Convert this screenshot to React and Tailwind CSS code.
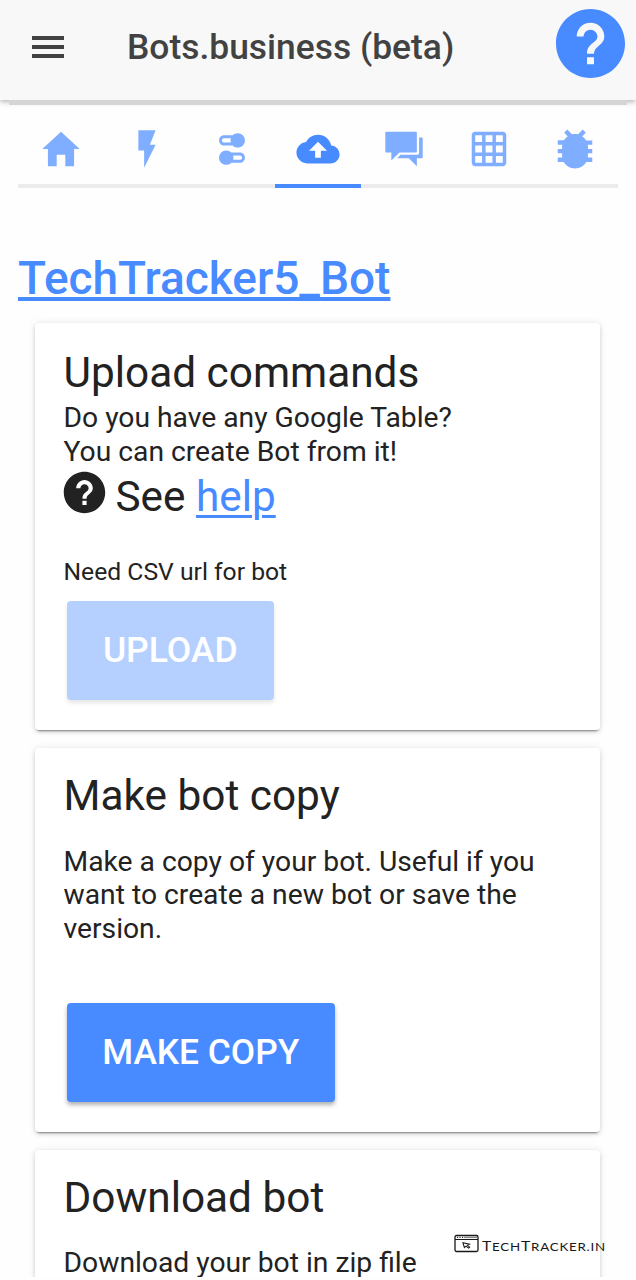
import {
  IoMdHome,
  IoMdFlash,
  IoMdSwitch,
  IoMdCloudUpload,
  IoMdChatboxes,
  IoMdGrid,
  IoMdBug,
  IoMdHelpCircle,
} from "react-icons/io";

const tabs = [
  { name: "Home", Icon: IoMdHome },
  { name: "Commands", Icon: IoMdFlash },
  { name: "Options", Icon: IoMdSwitch },
  { name: "Upload", Icon: IoMdCloudUpload, active: true },
  { name: "Chats", Icon: IoMdChatboxes },
  { name: "Tables", Icon: IoMdGrid },
  { name: "Errors", Icon: IoMdBug },
];

function Header() {
  return (
    <header className="relative z-10 flex h-[100px] shrink-0 items-center bg-[#f8f8f8] pl-8 pr-[11px] shadow-[0_2px_5px_rgba(0,0,0,0.28)]">
      <button aria-label="Menu" className="mt-[-6px] flex w-8 flex-col gap-[5px]">
        <span className="h-1 bg-[#424242]" />
        <span className="h-1 bg-[#424242]" />
        <span className="h-1 bg-[#424242]" />
      </button>
      <h1 className="ml-[63px] mt-[-6px] flex-1 whitespace-nowrap text-[35.4px] font-medium leading-[42px] text-[#424242]">
        Bots.business (beta)
      </h1>
      <button aria-label="Help" className="mt-[-14px]">
        <IoMdHelpCircle className="size-[85px] -m-2 text-[#488aff]" />
      </button>
    </header>
  );
}

function Tabs() {
  return (
    <nav className="mx-[18px] flex h-[83px] shrink-0 border-b-4 border-[#ececec]">
      {tabs.map(({ name, Icon, active }) => (
        <button
          key={name}
          aria-label={name}
          className={
            active
              ? "-mb-1 flex flex-1 justify-center border-b-4 border-[#488aff] pt-[21px] text-[#488aff]"
              : "flex flex-1 justify-center pt-[21px] text-[#7fadff]"
          }
        >
          <Icon className="size-[46px]" />
        </button>
      ))}
    </nav>
  );
}

function Card({ className, children }) {
  return (
    <section
      className={`ml-[35px] w-[565px] shrink-0 rounded-[4px] bg-white pl-[28.5px] shadow-[0_3px_2px_-2px_rgba(0,0,0,0.4),0_0_9px_rgba(0,0,0,0.08),0_2px_4px_rgba(0,0,0,0.14)] ${className}`}
    >
      {children}
    </section>
  );
}

function CardTitle({ children }) {
  return <h2 className="text-[42.35px] leading-[50px]">{children}</h2>;
}

export default function App() {
  return (
    <div className="relative flex h-[1280px] w-[636px] flex-col overflow-hidden bg-[#fefefe] font-[Roboto,sans-serif] text-[#222]">
      <div className="flex h-[1277px] flex-col overflow-hidden">
        <Header />
        <div className="relative z-10 mx-[9px] h-[5px] shrink-0 bg-[#d5d5d5]" />
        <Tabs />
        <h2 className="ml-[18px] mt-[63px] text-[46px] font-medium leading-[55px] text-[#488aff]">
          <a className="underline decoration-[4px] underline-offset-[3px] [text-decoration-skip-ink:none]">TechTracker5_Bot</a>
        </h2>

        <Card className="mt-[17px] h-[407px] pt-[25px]">
          <CardTitle>Upload commands</CardTitle>
          <p className="mt-[3px] text-[28.25px] leading-[33.5px]">
            Do you have any Google Table?
            <br />
            You can create Bot from it!
          </p>
          <div className="flex h-[54px] items-start text-[42.3px] leading-[50px]">
            <IoMdHelpCircle className="-ml-[5px] -mt-[1px] mr-[6px] size-[51px]" />
            <span className="mt-[4px]">
              See <a className="text-[#488aff] underline decoration-[3px] underline-offset-[4px]">help</a>
            </span>
          </div>
          <p className="mt-[35px] text-[24.7px] leading-[29px]">Need CSV url for bot</p>
          <button className="ml-[3.5px] mt-[15px] h-[99px] w-[206.5px] rounded-[4px] bg-[#b5d0ff] text-[35.5px] font-medium text-white shadow-[0_3px_4px_rgba(0,0,0,0.1)]">
            UPLOAD
          </button>
        </Card>

        <Card className="mt-[18px] h-[384px] pt-[23px]">
          <CardTitle>Make bot copy</CardTitle>
          <p className="mt-[23.6px] w-[490px] text-[28.25px] leading-[33.5px]">
            Make a copy of your bot. Useful if you want to create a new bot or save the version.
          </p>
          <button className="ml-[3.5px] mt-[57.9px] h-[99px] w-[267.5px] rounded-[4px] bg-[#488aff] text-[35.3px] font-medium text-white shadow-[0_3px_4px_rgba(0,0,0,0.3)]">
            MAKE COPY
          </button>
        </Card>

        <Card className="mt-[18px] h-[384px] pt-[23px]">
          <CardTitle>Download bot</CardTitle>
          <p className="mt-[23px] text-[28.25px] leading-[33.5px]">Download your bot in zip file</p>
        </Card>
      </div>

      <div className="absolute left-[454px] top-[1234px] flex items-start gap-[3px] text-[#181818]">
        <svg viewBox="0 0 25 19" className="h-[19px] w-[25px]" fill="none" stroke="currentColor">
          <rect x="1" y="1.5" width="23" height="16" rx="1.5" strokeWidth="1.3" />
          <path d="M1 5.5h23" strokeWidth="1" />
          <path d="M3 3.4h1.2M5.5 3.4h1.2M8 3.4h1.2" strokeWidth="1" />
          <path d="M10 3.4h13" strokeWidth="1.4" stroke="#888" />
          <path d="M9 8.8l1.4 4.8 1.6-1.5 2.6 2 1-.9-2.2-2.1 2-1z" strokeWidth="1.1" />
        </svg>
        <span className="mt-[5px] origin-left scale-x-[1.21] whitespace-nowrap font-[Lato,sans-serif] text-[11px] leading-[15px] tracking-[0.65px]">
          <span className="text-[13px]">T</span>ECH<span className="text-[13px]">T</span>RACKER.IN
        </span>
      </div>
    </div>
  );
}
